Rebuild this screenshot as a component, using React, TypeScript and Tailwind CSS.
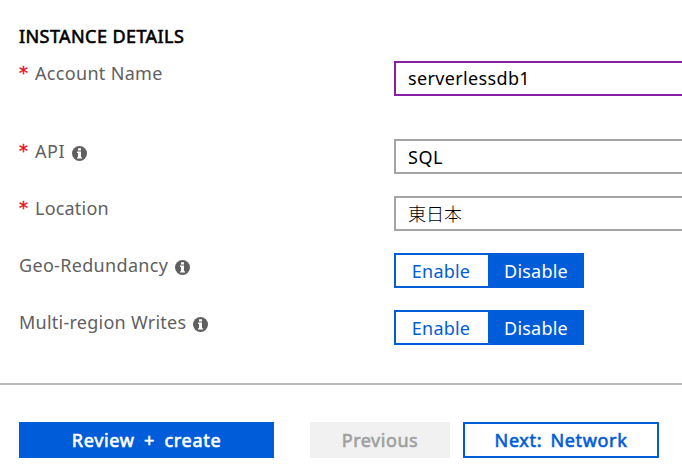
import type { ReactNode } from 'react';

function InfoIcon() {
  return (
    <svg width="15" height="15" viewBox="0 0 15 15" className="mt-[5px] shrink-0" aria-label="info">
      <circle cx="7.5" cy="7.5" r="7.5" fill="#5f5f5f" />
      <path d="M6 2.2h3v2.3H6zM5 5.6h4v5.6h1v1.3H5v-1.3h1V6.9H5z" fill="#fff" />
    </svg>
  );
}

function Field({ label, tracking, required, info, height, children }: { label: string; tracking: string; required?: boolean; info?: boolean; height: string; children: ReactNode }) {
  return (
    <div className={`flex items-start pl-[19px] ${height}`}>
      <div className="flex h-6 w-[375px] items-center text-[#5f5f5f]">
        {required && <span className="w-4 font-['DejaVu_Sans',sans-serif] text-[#e81123] [-webkit-text-stroke:0.4px_#e81123]">*</span>}
        <span className={tracking}>{label}</span>
        {info && <span className="ml-[7px]"><InfoIcon /></span>}
      </div>
      {children}
    </div>
  );
}

function Input({ active, children }: { active?: boolean; children: ReactNode }) {
  return (
    <div className={`flex h-[35px] flex-1 items-center border-2 border-r-0 pl-3 ${active ? 'border-[#881ea5] pb-0.5' : 'border-[#a5a5a5]'}`}>
      {children}
    </div>
  );
}

function Toggle() {
  return (
    <div className="flex h-[35px] w-[190px] border-2 border-[#015cda] tracking-[0.2px]">
      <button className="w-[92px] bg-white pr-0.5 text-[#015cda]">Enable</button>
      <button className="flex-1 bg-[#015cda] pl-0.5 text-white">Disable</button>
    </div>
  );
}

export default function App() {
  return (
    <div className="h-[470px] w-[682px] overflow-hidden bg-white pt-6 font-['Noto_Sans','Noto_Sans_CJK_JP',sans-serif] text-[18px] leading-6 text-black">
      <h2 className="mb-[13px] ml-[19px] text-[18px] tracking-[0.42px] [-webkit-text-stroke:0.6px_black]">INSTANCE DETAILS</h2>
      <Field label="Account Name" tracking="tracking-[0.32px]" required height="h-[78px]"><Input active><span className="tracking-[0.35px]">serverlessdb1</span></Input></Field>
      <Field label="API" tracking="tracking-[0.5px]" required info height="h-[57px]"><Input><span className="tracking-[0.5px]">SQL</span></Input></Field>
      <Field label="Location" tracking="tracking-[0.2px]" required height="h-[57px]"><Input><span className="font-light">東日本</span></Input></Field>
      <Field label="Geo-Redundancy" tracking="tracking-[0.32px]" info height="h-[57px]"><Toggle /></Field>
      <Field label="Multi-region Writes" tracking="tracking-[0.25px]" info height="h-[73px]"><Toggle /></Field>
      <div className="h-0.5 bg-[#bababa]" />
      <div className="mt-[37px] flex pl-[19px]">
        <button className="h-9 w-[255px] bg-[#015cda] tracking-[0.7px] text-white [word-spacing:4px] [-webkit-text-stroke:0.6px_white]">Review + create</button>
        <button className="ml-9 h-9 w-[140px] bg-[#f1f1f1] tracking-[0.55px] text-[#a0a0a0] [-webkit-text-stroke:0.6px_#a0a0a0]">Previous</button>
        <button className="ml-[13px] h-9 w-[196px] border-2 border-[#015cda] tracking-[0.65px] text-[#015cda] [word-spacing:3px] [-webkit-text-stroke:0.6px_#015cda]">Next: Network</button>
      </div>
    </div>
  );
}
